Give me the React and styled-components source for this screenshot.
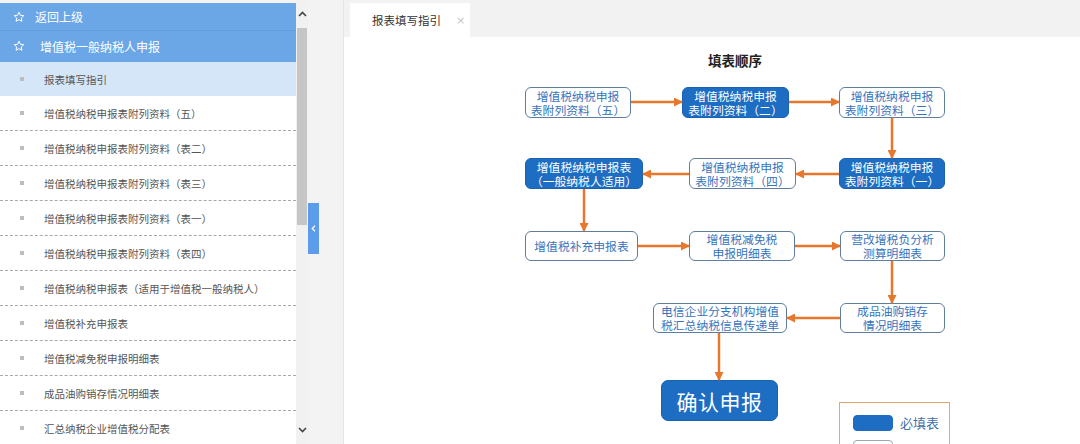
import React from "react";
import styled, { createGlobalStyle } from "styled-components";

const Global = createGlobalStyle`
  html, body { margin: 0; padding: 0; }
  body {
    width: 1080px; height: 444px; overflow: hidden; background: #f2f2f2;
    font-family: "Noto Sans CJK SC", "Noto Sans", sans-serif;
  }
  * { box-sizing: border-box; }
`;

const Page = styled.div`
  display: flex;
  width: 1080px;
  height: 444px;
  overflow: hidden;
`;

/* ---------------- Sidebar ---------------- */
const Sidebar = styled.nav`
  width: 296px;
  flex: none;
  height: 444px;
  overflow: hidden;
  background: #fff;
  padding-top: 3px;
  box-shadow: inset 0 3px 0 #f4f4f4;
`;

const HeadRow = styled.div`
  display: flex;
  align-items: center;
  height: ${(p) => p.$h}px;
  background: #6ba6e7;
  border-bottom: 1px solid ${(p) => (p.$divider ? "#5f9adb" : "#6ba6e7")};
  color: #fff;
  font-size: 12px;
  padding-left: 13px;
  gap: ${(p) => p.$gap}px;
`;

const StarIcon = () => (
  <svg width="12" height="12" viewBox="0 0 24 24" fill="none" stroke="#fff" strokeWidth="2" strokeLinejoin="round">
    <path d="M12 2.5l2.9 6.1 6.6.8-4.9 4.6 1.3 6.6L12 17.3l-5.9 3.3 1.3-6.6-4.9-4.6 6.6-.8z" />
  </svg>
);

const Item = styled.div`
  display: flex;
  align-items: center;
  height: ${(p) => p.$h}px;
  padding-left: 20px;
  gap: 20px;
  font-size: 10.5px;
  color: #555;
  background: ${(p) => (p.$active ? "#d5e6f9" : "#fff")};
  border-bottom: ${(p) => (p.$active ? "none" : "1px dashed #a8a8a8")};
`;

const Bullet = styled.span`
  width: 4px;
  height: 4px;
  background: #bdbdbd;
  flex: none;
`;

const Scrollbar = styled.div`
  width: 12px;
  flex: none;
  height: 444px;
  background: #f1f1f1;
  display: flex;
  flex-direction: column;
  align-items: center;
`;

const ScrollBtn = styled.div`
  height: ${(p) => p.$h}px;
  width: 12px;
  display: flex;
  align-items: center;
  justify-content: center;
  flex: none;
`;

const Thumb = styled.div`
  width: 10px;
  height: 197px;
  background: #c6c6c6;
  flex: none;
`;

const Spacer = styled.div`
  flex: 1;
`;

const Gutter = styled.div`
  width: 36px;
  flex: none;
  height: 444px;
  background: #f3f3f3;
  border-right: 1px solid #e6e6e6;
  padding-top: 203px;
`;

const Toggle = styled.div`
  width: 11px;
  height: 51px;
  background: #5d9ce9;
  display: flex;
  align-items: center;
  justify-content: center;
`;

/* ---------------- Main ---------------- */
const Main = styled.main`
  flex: 1;
  display: flex;
  flex-direction: column;
  height: 444px;
  background: #fff;
`;

const TabBar = styled.div`
  height: 37px;
  flex: none;
  background: #f2f2f2;
  display: flex;
  align-items: flex-end;
  padding-left: 6px;
`;

const Tab = styled.div`
  width: 120px;
  height: 34px;
  background: #fff;
  display: flex;
  align-items: center;
  padding-left: 22px;
  font-size: 11.5px;
  color: #333;
`;

const TabClose = styled.span`
  margin-left: 15px;
  color: #c4c4c4;
  font-size: 11px;
  font-family: "DejaVu Sans", sans-serif;
`;

const Content = styled.div`
  flex: 1;
  padding-left: 176px;
  padding-top: 13px;
  overflow: hidden;
`;

const Diagram = styled.div`
  width: 430px;
`;

const Title = styled.div`
  text-align: center;
  font-size: 13.5px;
  font-weight: 700;
  line-height: 20px;
  color: #222;
`;

const Canvas = styled.div`
  position: relative;
  height: 380px;
`;

const Arrows = styled.svg`
  position: absolute;
  left: 0;
  top: 0;
  overflow: visible;
`;

const Node = styled.div`
  position: absolute;
  left: ${(p) => p.$x}px;
  top: ${(p) => p.$y}px;
  width: ${(p) => p.$w}px;
  height: ${(p) => p.$h}px;
  border-radius: 6px;
  display: flex;
  flex-direction: column;
  align-items: center;
  justify-content: center;
  font-size: 11.8px;
  line-height: 14px;
  white-space: nowrap;
  background: ${(p) => (p.$filled ? "#1d6dc3" : "#fff")};
  color: ${(p) => (p.$filled ? "#fff" : "#3573bd")};
  border: 1.5px solid ${(p) => (p.$filled ? "#1a62b0" : "#617d9d")};
`;

const NodeLine = styled.span`
  display: block;
  height: 14px;
`;

const ConfirmNode = styled(Node)`
  font-size: 21px;
  line-height: 24px;
  border-radius: 7px;
  letter-spacing: 0.5px;
`;

const Legend = styled.div`
  position: absolute;
  left: ${(p) => p.$x}px;
  top: ${(p) => p.$y}px;
  width: 111px;
  height: 70px;
  border: 1.5px solid #e2a66e;
  padding: 10px 0 0 13px;
  display: flex;
  flex-direction: column;
  gap: 8px;
`;

const LegendRow = styled.div`
  display: flex;
  align-items: center;
  gap: 7px;
  font-size: 13px;
  color: #3f6fa8;
`;

const Swatch = styled.span`
  width: 40px;
  height: 16px;
  border-radius: 4px;
  background: ${(p) => (p.$filled ? "#1d6dc3" : "#fff")};
  border: 1px solid ${(p) => (p.$filled ? "#1d6dc3" : "#9aa6b4")};
`;

const OX = 520;
const OY = 71;

const nodes = [
  { x1: 525, y1: 88, x2: 631, y2: 119, f: false, t: ["增值税纳税申报", "表附列资料（五）"] },
  { x1: 682, y1: 88, x2: 789, y2: 119, f: true, t: ["增值税纳税申报", "表附列资料（二）"] },
  { x1: 839, y1: 88, x2: 945, y2: 119, f: false, t: ["增值税纳税申报", "表附列资料（三）"] },
  { x1: 525, y1: 159, x2: 643, y2: 190, f: true, t: ["增值税纳税申报表", "（一般纳税人适用）"] },
  { x1: 689, y1: 159, x2: 796, y2: 190, f: false, t: ["增值税纳税申报", "表附列资料（四）"] },
  { x1: 839, y1: 159, x2: 945, y2: 190, f: true, t: ["增值税纳税申报", "表附列资料（一）"] },
  { x1: 525, y1: 232, x2: 638, y2: 262, f: false, t: ["增值税补充申报表"] },
  { x1: 689, y1: 232, x2: 795, y2: 262, f: false, t: ["增值税减免税", "申报明细表"] },
  { x1: 840, y1: 232, x2: 945, y2: 262, f: false, t: ["营改增税负分析", "测算明细表"] },
  { x1: 653, y1: 304, x2: 787, y2: 334, f: false, t: ["电信企业分支机构增值", "税汇总纳税信息传递单"] },
  { x1: 840, y1: 304, x2: 945, y2: 334, f: false, t: ["成品油购销存", "情况明细表"] },
];

const arrows = [
  [631, 103, 682, 103],
  [789, 103, 839, 103],
  [892, 119, 892, 159],
  [839, 175, 796, 175],
  [689, 175, 643, 175],
  [584, 190, 584, 232],
  [638, 247, 689, 247],
  [795, 247, 840, 247],
  [892, 262, 892, 304],
  [840, 319, 787, 319],
  [719, 334, 719, 381],
];

const menu = [
  "增值税纳税申报表附列资料（五）",
  "增值税纳税申报表附列资料（表二）",
  "增值税纳税申报表附列资料（表三）",
  "增值税纳税申报表附列资料（表一）",
  "增值税纳税申报表附列资料（表四）",
  "增值税纳税申报表（适用于增值税一般纳税人）",
  "增值税补充申报表",
  "增值税减免税申报明细表",
  "成品油购销存情况明细表",
  "汇总纳税企业增值税分配表",
];

const Chevron = ({ up }) => (
  <svg width="9" height="6" viewBox="0 0 9 6">
    <polyline
      points={up ? "1,5 4.5,1.5 8,5" : "1,1 4.5,4.5 8,1"}
      fill="none"
      stroke="#444"
      strokeWidth="1.6"
    />
  </svg>
);

export default function App() {
  return (
    <>
      <Global />
      <Page>
        <Sidebar>
          <HeadRow $h={28} $gap={10} $divider>
            <StarIcon />
            <span>返回上级</span>
          </HeadRow>
          <HeadRow $h={31} $gap={15}>
            <StarIcon />
            <span>增值税一般纳税人申报</span>
          </HeadRow>
          <Item $h={34} $active>
            <Bullet />
            <span>报表填写指引</span>
          </Item>
          {menu.map((m) => (
            <Item key={m} $h={35}>
              <Bullet />
              <span>{m}</span>
            </Item>
          ))}
        </Sidebar>
        <Scrollbar>
          <ScrollBtn $h={28}>
            <Chevron up />
          </ScrollBtn>
          <Thumb />
          <Spacer />
          <ScrollBtn $h={28}>
            <Chevron />
          </ScrollBtn>
        </Scrollbar>
        <Gutter>
          <Toggle>
            <svg width="5" height="7" viewBox="0 0 5 7">
              <polyline points="4,0.8 1.2,3.5 4,6.2" fill="none" stroke="#fff" strokeWidth="1.2" />
            </svg>
          </Toggle>
        </Gutter>
        <Main>
          <TabBar>
            <Tab>
              报表填写指引
              <TabClose>×</TabClose>
            </Tab>
          </TabBar>
          <Content>
            <Diagram>
              <Title>填表顺序</Title>
              <Canvas>
                {nodes.map((n, i) => (
                  <Node
                    key={i}
                    $x={n.x1 - OX}
                    $y={n.y1 - OY}
                    $w={n.x2 - n.x1}
                    $h={n.y2 - n.y1}
                    $filled={n.f}
                  >
                    {n.t.map((l) => (
                      <NodeLine key={l}>{l}</NodeLine>
                    ))}
                  </Node>
                ))}
                <ConfirmNode $x={661 - OX} $y={381 - OY} $w={117} $h={41} $filled>
                  确认申报
                </ConfirmNode>
                <Legend $x={839 - OX} $y={403 - OY}>
                  <LegendRow>
                    <Swatch $filled />
                    <span>必填表</span>
                  </LegendRow>
                  <LegendRow>
                    <Swatch />
                  </LegendRow>
                </Legend>
                <Arrows width="430" height="380">
                  <defs>
                    <marker id="ah" markerWidth="9" markerHeight="9" refX="8" refY="4.5" orient="auto" markerUnits="userSpaceOnUse">
                      <path d="M0,0 L9,4.5 L0,9 z" fill="#e8772e" />
                    </marker>
                  </defs>
                  {arrows.map(([x1, y1, x2, y2], i) => (
                    <line
                      key={i}
                      x1={x1 - OX}
                      y1={y1 - OY}
                      x2={x2 - OX}
                      y2={y2 - OY}
                      stroke="#e8772e"
                      strokeWidth="2.5"
                      markerEnd="url(#ah)"
                    />
                  ))}
                </Arrows>
              </Canvas>
            </Diagram>
          </Content>
        </Main>
      </Page>
    </>
  );
}
